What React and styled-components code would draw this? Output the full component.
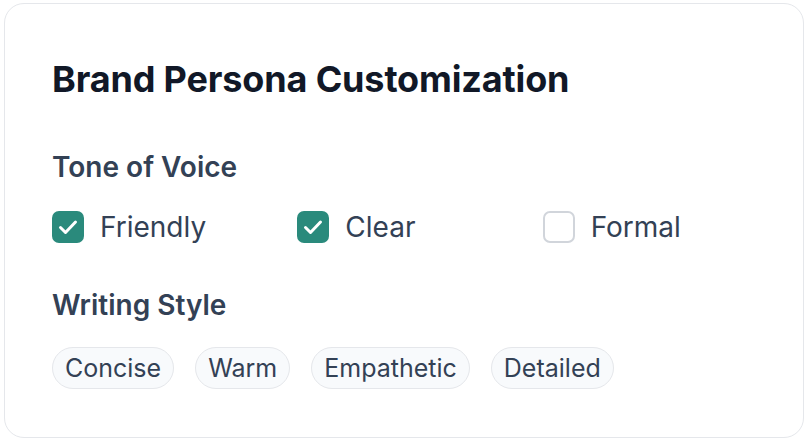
import React from "react";
import styled, { createGlobalStyle } from "styled-components";

const Global = createGlobalStyle`
  html, body { margin: 0; padding: 0; background: #ffffff; }
  body { font-family: Inter, "Noto Sans", sans-serif; -webkit-font-smoothing: antialiased; }
`;

const Page = styled.div`
  padding: 3px 4px;
`;

const Card = styled.section`
  box-sizing: border-box;
  width: 800px;
  height: 435px;
  border: 1px solid #e5e7eb;
  border-radius: 20px;
  background: #ffffff;
  padding: 53px 47px;
  display: flex;
  flex-direction: column;
`;

const Title = styled.h1`
  margin: 0;
  font-size: 36px;
  line-height: 44px;
  font-weight: 700;
  color: #111827;
  letter-spacing: -0.15px;
`;

const SectionTitle = styled.h2`
  margin: ${(p) => p.$mt}px 0 0;
  font-size: 28px;
  line-height: 36px;
  font-weight: 600;
  color: #334155;
`;

const OptionGrid = styled.div`
  margin-top: 24px;
  display: grid;
  grid-template-columns: repeat(3, 1fr);
  column-gap: 32px;
`;

const Option = styled.label`
  display: flex;
  align-items: center;
  gap: 16px;
  font-size: 28px;
  line-height: 36px;
  color: #334155;
`;

const Box = styled.span`
  box-sizing: border-box;
  width: 32px;
  height: 32px;
  border-radius: 7px;
  display: flex;
  align-items: center;
  justify-content: center;
  background: ${(p) => (p.$checked ? "#2a8a7c" : "#ffffff")};
  border: ${(p) => (p.$checked ? "none" : "2px solid #d1d5db")};
`;

const Chips = styled.div`
  margin-top: 24px;
  display: flex;
  gap: 21px;
`;

const Chip = styled.span`
  box-sizing: border-box;
  height: 42px;
  padding: 0 12px;
  display: inline-flex;
  align-items: center;
  border: 1.5px solid #e5e7eb;
  border-radius: 999px;
  background: #f8fafc;
  color: #334155;
  font-size: 25px;
`;

const Check = () => (
  <svg width="24" height="24" viewBox="0 0 24 24" fill="none" stroke="#fff" strokeWidth="3" strokeLinecap="round" strokeLinejoin="round">
    <path d="M4.5 12.5L9.5 17.5L19.5 7" />
  </svg>
);

const tones = [
  { label: "Friendly", checked: true },
  { label: "Clear", checked: true },
  { label: "Formal", checked: false },
];

const styles = ["Concise", "Warm", "Empathetic", "Detailed"];

export default function App() {
  return (
    <Page>
      <Global />
      <Card>
        <Title>Brand Persona Customization</Title>
        <SectionTitle $mt={48}>Tone of Voice</SectionTitle>
        <OptionGrid>
          {tones.map((t) => (
            <Option key={t.label}>
              <Box $checked={t.checked}>{t.checked && <Check />}</Box>
              {t.label}
            </Option>
          ))}
        </OptionGrid>
        <SectionTitle $mt={42}>Writing Style</SectionTitle>
        <Chips>
          {styles.map((s) => (
            <Chip key={s}>{s}</Chip>
          ))}
        </Chips>
      </Card>
    </Page>
  );
}
